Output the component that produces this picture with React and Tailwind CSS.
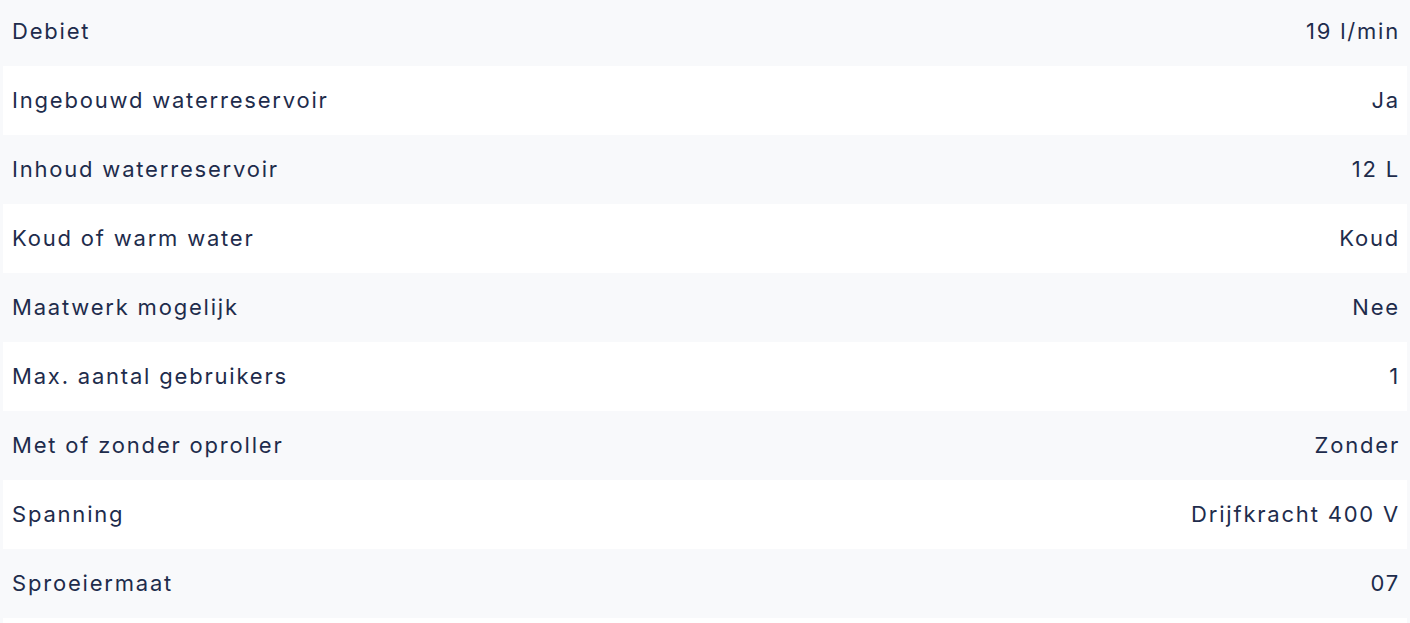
const specs = [
  ["Debiet", "19 l/min"],
  ["Ingebouwd waterreservoir", "Ja"],
  ["Inhoud waterreservoir", "12 L"],
  ["Koud of warm water", "Koud"],
  ["Maatwerk mogelijk", "Nee"],
  ["Max. aantal gebruikers", "1"],
  ["Met of zonder oproller", "Zonder"],
  ["Spanning", "Drijfkracht 400 V"],
  ["Sproeiermaat", "07"],
  ["", ""],
];

export default function App() {
  return (
    <div className="h-[623px] overflow-hidden bg-[#f8f9fb] px-[3px] font-['Inter',sans-serif] text-[#1e2c4c]">
      <div className="-mt-[3px] flex flex-col">
        {specs.map(([label, value], i) => (
          <div
            key={i}
            className={`flex h-[69px] shrink-0 items-center justify-between px-[9px] text-[22px] tracking-[1.8px] ${
              i % 2 === 1 ? "bg-white" : ""
            }`}
          >
            <span>{label}</span>
            <span className="-mr-[2px]">{value}</span>
          </div>
        ))}
      </div>
    </div>
  );
}
